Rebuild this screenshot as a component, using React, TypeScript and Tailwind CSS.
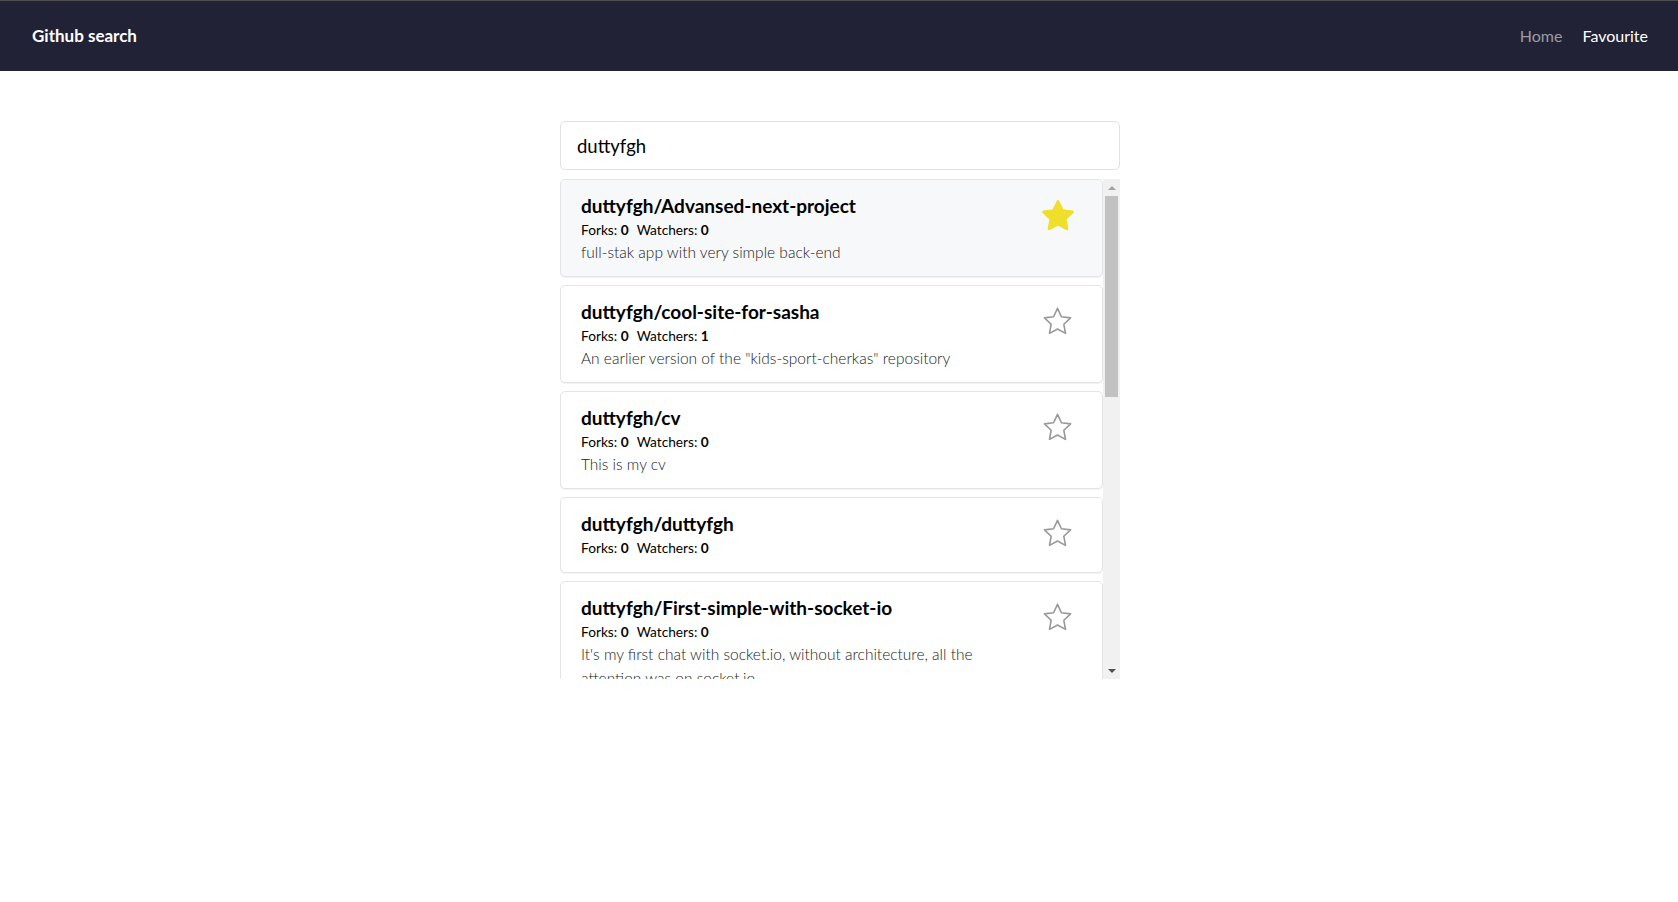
import { useState } from "react";

type Repo = {
  name: string;
  forks: number;
  watchers: number;
  description?: string;
};

const repos: Repo[] = [
  {
    name: "duttyfgh/Advansed-next-project",
    forks: 0,
    watchers: 0,
    description: "full-stak app with very simple back-end",
  },
  {
    name: "duttyfgh/cool-site-for-sasha",
    forks: 0,
    watchers: 1,
    description: 'An earlier version of the "kids-sport-cherkas" repository',
  },
  { name: "duttyfgh/cv", forks: 0, watchers: 0, description: "This is my cv" },
  { name: "duttyfgh/duttyfgh", forks: 0, watchers: 0 },
  {
    name: "duttyfgh/First-simple-with-socket-io",
    forks: 0,
    watchers: 0,
    description:
      "It's my first chat with socket.io, without architecture, all the attention was on socket.io",
  },
];

const STAR =
  "M16 3.2 L19.9 11.3 L28.8 12.4 L22.3 18.6 L23.9 27.4 L16 23.1 L8.1 27.4 L9.7 18.6 L3.2 12.4 L12.1 11.3 Z";

function StarIcon({ filled }: { filled: boolean }) {
  if (filled) {
    return (
      <svg width="36" height="36" viewBox="0 0 32 32">
        <path d={STAR} fill="#efdf2a" stroke="#efdf2a" strokeWidth="2.6" strokeLinejoin="round" />
      </svg>
    );
  }
  return (
    <svg width="37" height="37" viewBox="0 0 32 32">
      <path
        d="M16 4.6 L19.4 11.9 L27.3 12.9 L21.5 18.4 L22.9 26.3 L16 22.5 L9.1 26.3 L10.5 18.4 L4.7 12.9 L12.6 11.9 Z"
        fill="none"
        stroke="#999999"
        strokeWidth="1.4"
        strokeLinejoin="round"
      />
    </svg>
  );
}

function RepoCard({ repo, fav, onToggle }: { repo: Repo; fav: boolean; onToggle: () => void }) {
  return (
    <div
      className={`flex justify-between border border-[#e4e4e7] rounded-[5px] mb-2 pt-3 pb-3 pl-5 pr-[26px] shadow-[0_1px_1px_rgba(0,0,0,0.06)] ${
        fav ? "bg-[#f7f8fa]" : "bg-white"
      }`}
    >
      <div className="w-[400px]">
        <h2 className="text-[19px] leading-[28px] font-bold text-black">{repo.name}</h2>
        <p className="text-[13.7px] leading-5 text-black">
          <span className="mr-2">
            Forks: <b>{repo.forks}</b>
          </span>
          <span>
            Watchers: <b>{repo.watchers}</b>
          </span>
        </p>
        {repo.description ? (
          <p className="text-[15.5px] leading-6 font-light text-[#222]">{repo.description}</p>
        ) : (
          <div className="h-[2px]" />
        )}
      </div>
      <button onClick={onToggle} className="w-[37px] h-[37px] mt-[5px] flex items-center justify-center">
        <StarIcon filled={fav} />
      </button>
    </div>
  );
}

export default function App() {
  const [query, setQuery] = useState("duttyfgh");
  const [favs, setFavs] = useState<string[]>(["duttyfgh/Advansed-next-project"]);

  const toggle = (name: string) =>
    setFavs((f) => (f.includes(name) ? f.filter((n) => n !== name) : [...f, name]));

  return (
    <div className="min-h-screen bg-white font-['Lato','Liberation_Sans',sans-serif]">
      <nav className="h-[71px] bg-[#222236] border-t border-[#4d4d4d] flex items-center justify-between pl-8 pr-[30px]">
        <span className="text-white font-bold text-[17px]">Github search</span>
        <div className="flex items-center gap-5 text-[16px]">
          <a className="text-[#9b9ca4]">Home</a>
          <a className="text-white">Favourite</a>
        </div>
      </nav>

      <div className="w-[560px] ml-[calc(50%-279px)] mt-[50px]">
        <input
          value={query}
          onChange={(e) => setQuery(e.target.value)}
          className="w-full h-[49px] border border-[#e2e2e4] rounded-[5px] px-4 text-[18.5px] text-black outline-none mb-[9px]"
        />

        <div className="flex h-[500px]">
          <div className="flex-1 overflow-hidden">
            {repos.map((r) => (
              <RepoCard key={r.name} repo={r} fav={favs.includes(r.name)} onToggle={() => toggle(r.name)} />
            ))}
          </div>
          {/* scrollbar */}
          <div className="w-[17px] bg-[#f1f1f1] flex flex-col">
            <div className="h-[17px] flex items-center justify-center">
              <div className="w-0 h-0 border-l-[4px] border-r-[4px] border-b-[4px] border-l-transparent border-r-transparent border-b-[#a3a3a3]" />
            </div>
            <div className="h-[201px] mx-[2px] bg-[#c1c1c1]" />
            <div className="flex-1" />
            <div className="h-[17px] flex items-center justify-center">
              <div className="w-0 h-0 border-l-[4px] border-r-[4px] border-t-[4px] border-l-transparent border-r-transparent border-t-[#505050]" />
            </div>
          </div>
        </div>
      </div>
    </div>
  );
}
